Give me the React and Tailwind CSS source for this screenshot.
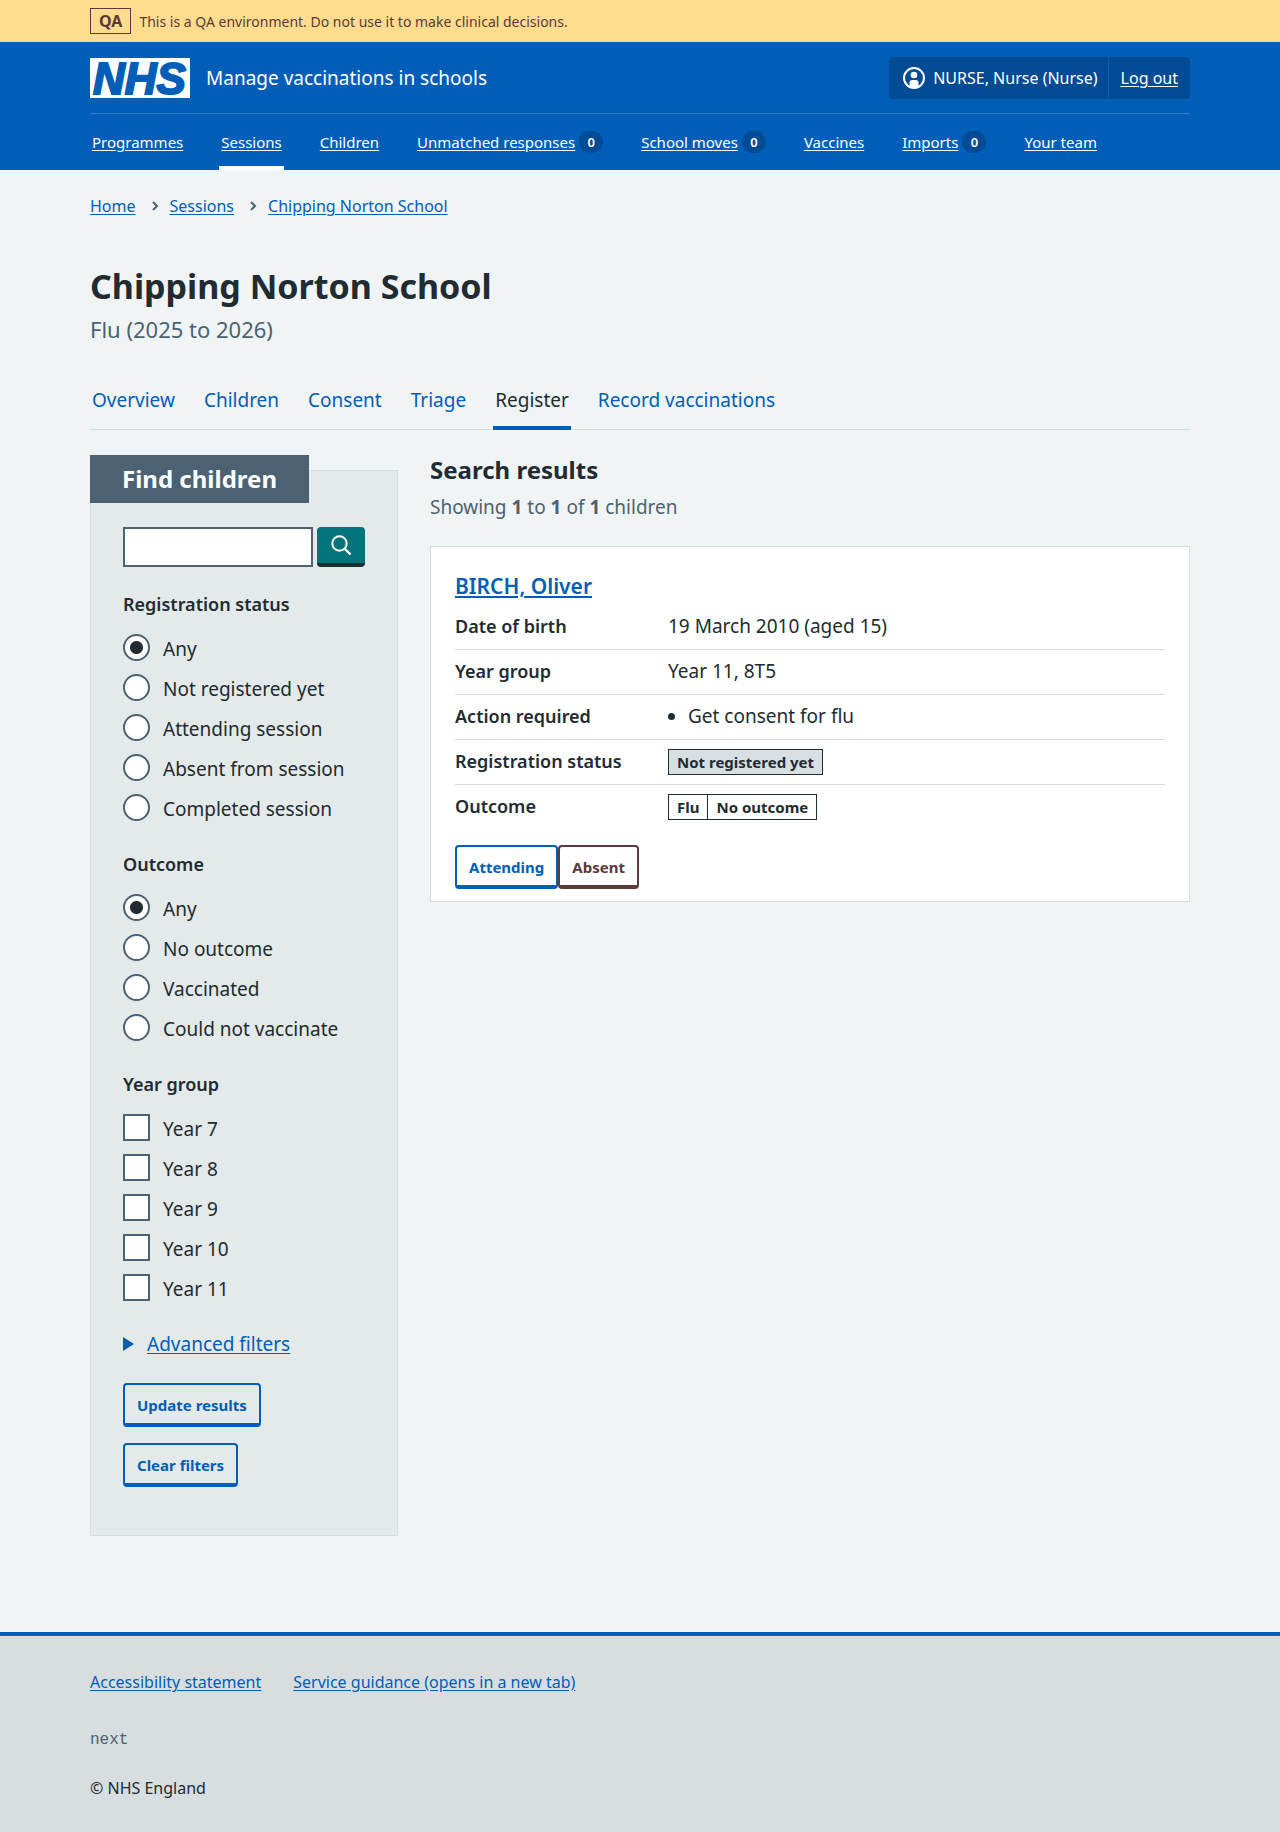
const NAV = [
  { label: "Programmes" },
  { label: "Sessions", current: true },
  { label: "Children" },
  { label: "Unmatched responses", count: 0 },
  { label: "School moves", count: 0 },
  { label: "Vaccines" },
  { label: "Imports", count: 0 },
  { label: "Your team" },
];

const TABS = ["Overview", "Children", "Consent", "Triage", "Register", "Record vaccinations"];

const container = "mx-auto w-[calc(100%-32px)] max-w-[1100px]";
const link = "text-[#005eb8] underline underline-offset-2";

function Banner() {
  return (
    <div className="bg-[#ffdc8e] text-[#5c3a38]">
      <div className={`${container} flex min-h-[42px] items-center gap-2`}>
        <strong className="border border-[#5c3a38] px-2 text-[16px] leading-6 font-bold">QA</strong>
        <span className="pt-0.5 text-[14px] leading-5">
          This is a QA environment. Do not use it to make clinical decisions.
        </span>
      </div>
    </div>
  );
}

function Logo() {
  return (
    <svg width="100" height="40" viewBox="0 0 100 40" role="img" aria-label="NHS" className="overflow-visible">
      <rect width="100" height="40" fill="#fff" />
      <text
        x="3"
        y="36"
        fill="#005eb8"
        stroke="#005eb8"
        strokeWidth="2"
        fontFamily="'Liberation Sans', sans-serif"
        fontSize="44"
        fontWeight="700"
        fontStyle="italic"
      >
        NHS
      </text>
    </svg>
  );
}

function UserIcon() {
  return (
    <svg width="22" height="22" viewBox="0 0 22 22" aria-hidden="true">
      <circle cx="11" cy="11" r="10" fill="none" stroke="#fff" strokeWidth="2" />
      <circle cx="11" cy="8" r="3.300" fill="#fff" />
      <path d="M6.500 20v-4.500c0-1.500 1.200-2.500 2.500-2.500h4c1.300 0 2.500 1 2.500 2.500V20c-3 1.500-6 1.500-9 0z" fill="#fff" />
    </svg>
  );
}

function Header() {
  return (
    <header className="bg-[#005eb8] text-white">
      <div className={container}>
        <div className="flex min-h-[71px] flex-wrap items-center justify-between">
          <a href="#" className="flex items-center gap-4">
            <Logo />
            <span className="text-[19px] leading-7">Manage vaccinations in schools</span>
          </a>
          <div className="flex rounded bg-[#004b93] text-[16px] leading-6">
            <span className="flex items-center gap-2 border-r border-[#005eb8] py-[9px] pr-2.5 pl-3.5">
              <UserIcon />
              NURSE, Nurse (Nurse)
            </span>
            <a href="#" className="px-3 py-[9px] underline underline-offset-2">Log out</a>
          </div>
        </div>
        <nav aria-label="Menu" className="border-t border-[#337ec6]">
          <ul className="flex flex-wrap gap-x-[34px] text-[15px] leading-6">
            {NAV.map((item) => (
              <li
                key={item.label}
                className={`flex min-h-14 items-center gap-1 border-b-4 px-0.5 pt-1 ${
                  item.current ? "border-white" : "border-transparent"
                }`}
              >
                <a href="#" className="underline underline-offset-2">{item.label}</a>
                {item.count !== undefined && (
                  <span className="flex h-[22px] min-w-6 items-center justify-center rounded-full bg-[#004b93] text-[13px] font-semibold">
                    {item.count}
                  </span>
                )}
              </li>
            ))}
          </ul>
        </nav>
      </div>
    </header>
  );
}

function Chevron() {
  return (
    <svg width="34" height="10" viewBox="0 0 34 10" fill="none" stroke="#4c6272" strokeWidth="2" aria-hidden="true">
      <path d="M17 1l4 4-4 4" />
    </svg>
  );
}

function Choice({ type, name, label, checked }) {
  return (
    <label className="flex min-h-10 items-center gap-[13px] text-[19px] leading-7">
      <input
        type={type}
        name={name}
        defaultChecked={checked}
        className={
          type === "radio"
            ? "size-[27px] shrink-0 appearance-none rounded-full border-2 border-[#4c6272] bg-white checked:bg-[radial-gradient(circle,#212b32_6px,white_7px)]"
            : "size-[27px] shrink-0 appearance-none border-2 border-[#4c6272] bg-white checked:bg-[#212b32]"
        }
      />
      <span className="pt-1">{label}</span>
    </label>
  );
}

function Group({ legend, type, name, options, selected }) {
  return (
    <fieldset className="mt-[23px]">
      <legend className="mb-[9px] text-[18px] leading-7 font-semibold">{legend}</legend>
      {options.map((o) => (
        <Choice key={o} type={type} name={name} label={o} checked={o === selected} />
      ))}
    </fieldset>
  );
}

function Button({ children, brown }) {
  return (
    <button
      type="button"
      className={`h-11 rounded border-2 border-b-4 px-3 pt-0.5 text-[15px] font-bold ${
        brown ? "border-[#5c3a38] text-[#5c3a38]" : "border-[#005eb8] text-[#005eb8]"
      }`}
    >
      {children}
    </button>
  );
}

function Filters() {
  return (
    <aside className="mt-10 w-full border border-[#d8dde0] bg-[#e4e9e9] md:w-[28%]">
      <h2 className="-mt-4 -ml-px w-fit bg-[#4c6272] px-8 py-2 text-[24px] leading-8 font-bold text-white">
        Find children
      </h2>
      <form className="px-8 pt-6 pb-12">
        <div className="flex gap-1">
          <input
            type="search"
            aria-label="Search"
            className="h-10 min-w-0 flex-1 border-2 border-[#4c6272] bg-white px-1 text-[19px]"
          />
          <button
            type="button"
            aria-label="Search"
            className="flex h-10 w-12 items-center justify-center rounded border-b-4 border-[#212b32] bg-[#00747a]"
          >
            <svg width="22" height="22" viewBox="0 0 22 22" fill="none" stroke="#fff" strokeWidth="2" aria-hidden="true">
              <circle cx="9.500" cy="9.500" r="7.200" />
              <path d="M14.500 14.500l6 6" strokeWidth="2.400" />
            </svg>
          </button>
        </div>
        <Group
          legend="Registration status"
          type="radio"
          name="registration"
          selected="Any"
          options={["Any", "Not registered yet", "Attending session", "Absent from session", "Completed session"]}
        />
        <Group
          legend="Outcome"
          type="radio"
          name="outcome"
          selected="Any"
          options={["Any", "No outcome", "Vaccinated", "Could not vaccinate"]}
        />
        <Group
          legend="Year group"
          type="checkbox"
          name="year"
          options={["Year 7", "Year 8", "Year 9", "Year 10", "Year 11"]}
        />
        <details className="mt-[23px]">
          <summary className="flex list-none items-center gap-[13px] text-[19px] leading-7 text-[#005eb8]">
            <svg width="11" height="14" viewBox="0 0 11 14" aria-hidden="true">
              <path d="M0 0l11 7-11 7z" fill="#005eb8" />
            </svg>
            <span className="underline underline-offset-2">Advanced filters</span>
          </summary>
        </details>
        <div className="mt-[25px] flex flex-col items-start gap-4">
          <Button>Update results</Button>
          <Button>Clear filters</Button>
        </div>
      </form>
    </aside>
  );
}

function Row({ term, last, children }) {
  return (
    <div className={`flex pt-[7px] pb-[9px] ${last ? "" : "border-b border-[#d8dde0]"}`}>
      <dt className="w-[30%] text-[18px] font-semibold">{term}</dt>
      <dd className="flex flex-1 items-end">{children}</dd>
    </div>
  );
}

function Results() {
  return (
    <section className="min-w-0 flex-1 pt-6">
      <h2 className="text-[24px] leading-8 font-bold">Search results</h2>
      <p className="mt-[7px] text-[19px] leading-7 text-[#4c6272]">
        Showing <b className="font-bold">1</b> to <b className="font-bold">1</b> of{" "}
        <b className="font-bold">1</b> children
      </p>
      <article className="mt-[25px] border border-[#d8dde0] bg-white px-6 pt-[25px] pb-3">
        <h3 className="text-[21px] leading-7 font-semibold">
          <a href="#" className="text-[#005eb8] underline decoration-2 underline-offset-2">BIRCH, Oliver</a>
        </h3>
        <dl className="mt-[5px] text-[19px] leading-7">
          <Row term="Date of birth">19 March 2010 (aged 15)</Row>
          <Row term="Year group">Year 11, 8T5</Row>
          <Row term="Action required">
            <ul className="list-disc pl-5">
              <li>Get consent for flu</li>
            </ul>
          </Row>
          <Row term="Registration status">
            <strong className="border border-[#212b32] bg-[#d8dfe2] px-2 text-[15px] leading-6 font-bold">
              Not registered yet
            </strong>
          </Row>
          <Row term="Outcome" last>
            <span className="flex divide-x divide-[#212b32] border border-[#212b32] text-[15px] leading-6">
              <strong className="px-2 font-bold">Flu</strong>
              <strong className="px-2 font-bold">No outcome</strong>
            </span>
          </Row>
        </dl>
        <div className="mt-4 flex">
          <Button>Attending</Button>
          <Button brown>Absent</Button>
        </div>
      </article>
    </section>
  );
}

export default function App() {
  return (
    <div className="flex min-h-screen flex-col bg-[#f0f4f5] font-['Noto_Sans',sans-serif] text-[#212b32]">
      <Banner />
      <Header />
      <div className={`${container} grow pt-6 pb-24`}>
        <nav aria-label="Breadcrumb">
          <ol className="flex flex-wrap items-center text-[16px] leading-6">
            <li className="flex items-center"><a href="#" className={link}>Home</a><Chevron /></li>
            <li className="flex items-center"><a href="#" className={link}>Sessions</a><Chevron /></li>
            <li><a href="#" className={link}>Chipping Norton School</a></li>
          </ol>
        </nav>
        <main>
          <h1 className="mt-[47px] text-[34px] leading-[42px] font-bold">Chipping Norton School</h1>
          <p className="mt-1.5 text-[22px] leading-8 text-[#4c6272]">Flu (2025 to 2026)</p>
          <nav aria-label="Session" className="mt-[27px] border-b border-[#d8dde0]">
            <ul className="flex flex-wrap gap-x-[25px] text-[19px] leading-7">
              {TABS.map((t) => (
                <li key={t} className="-mb-px">
                  <a
                    href="#"
                    className={`block border-b-4 px-0.5 pt-3.5 pb-3 ${
                      t === "Register" ? "border-[#005eb8]" : "border-transparent text-[#005eb8]"
                    }`}
                  >
                    {t}
                  </a>
                </li>
              ))}
            </ul>
          </nav>
          <div className="flex flex-col items-start gap-x-8 md:flex-row">
            <Filters />
            <Results />
          </div>
        </main>
      </div>
      <footer className="border-t-4 border-[#005eb8] bg-[#d8dde0] pt-[34px] pb-8">
        <div className={`${container} text-[16px] leading-6`}>
          <ul className="flex flex-wrap gap-x-8">
            <li><a href="#" className={link}>Accessibility statement</a></li>
            <li><a href="#" className={link}>Service guidance (opens in a new tab)</a></li>
          </ul>
          <p className="mt-[34px] font-['Liberation_Mono',monospace] text-[#4c6272]">next</p>
          <p className="mt-6">© NHS England</p>
        </div>
      </footer>
    </div>
  );
}
